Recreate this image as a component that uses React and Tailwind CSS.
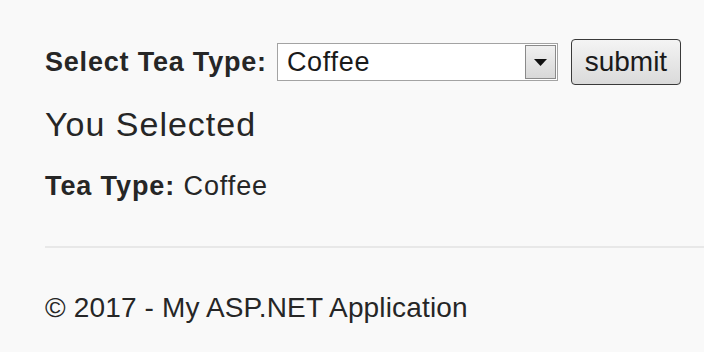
import { useState } from 'react';

const App = () => {
    const [teaType, setTeaType] = useState('Coffee');

    return (
        <div className="min-h-[352px] bg-[#f9f9f9] text-[#262626] overflow-hidden" style={{ fontFamily: '"Liberation Sans", Arial, sans-serif' }}>
            <div className="pl-[45px]">
                <form className="flex items-center pt-[39px] h-[85px]" onSubmit={(e) => e.preventDefault()}>
                    <label className="font-bold text-[27px] leading-none tracking-[0.8px]">Select Tea Type:</label>
                    <div className="relative ml-[10px] w-[281px] h-[38px]">
                        <select
                            value={teaType}
                            onChange={(e) => setTeaType(e.target.value)}
                            className="appearance-none w-full h-full bg-white border border-[#a3a3a3] pl-[9px] text-[27px] leading-none tracking-[0.7px] text-[#1a1a1a] outline-none"
                        >
                            <option>Coffee</option>
                            <option>Green Tea</option>
                            <option>Black Tea</option>
                        </select>
                        {/* dropdown arrow */}
                        <div className="pointer-events-none absolute right-[2px] top-[2px] bottom-[2px] w-[31px] border border-[#8a8a8a] bg-gradient-to-b from-[#f0f0f0] to-[#d8d8d8] flex items-center justify-center">
                            <svg width="13" height="7" viewBox="0 0 13 7">
                                <path d="M0 0 L13 0 L6.5 7 Z" fill="#111" />
                            </svg>
                        </div>
                    </div>
                    <button
                        type="submit"
                        className="ml-[13px] w-[110px] h-[46px] rounded-[4px] border-[1.5px] border-[#3a3a3a] bg-gradient-to-b from-[#f4f4f4] to-[#dadada] text-[28px] leading-none text-[#1a1a1a]"
                    >
                        submit
                    </button>
                </form>

                <h3 className="mt-[22px] text-[34px] leading-none font-normal tracking-[1px]">You Selected</h3>

                <p className="mt-[32px] text-[27px] leading-none tracking-[0.9px]">
                    <span className="font-bold">Tea Type:</span> {teaType}
                </p>

                <hr className="mt-[46px] border-0 border-t-2 border-[#e8e8e8]" />

                <footer className="mt-[46px] text-[28px] leading-none tracking-[0.15px]">
                    © 2017 - My ASP.NET Application
                </footer>
            </div>
        </div>
    );
};

export default App;
